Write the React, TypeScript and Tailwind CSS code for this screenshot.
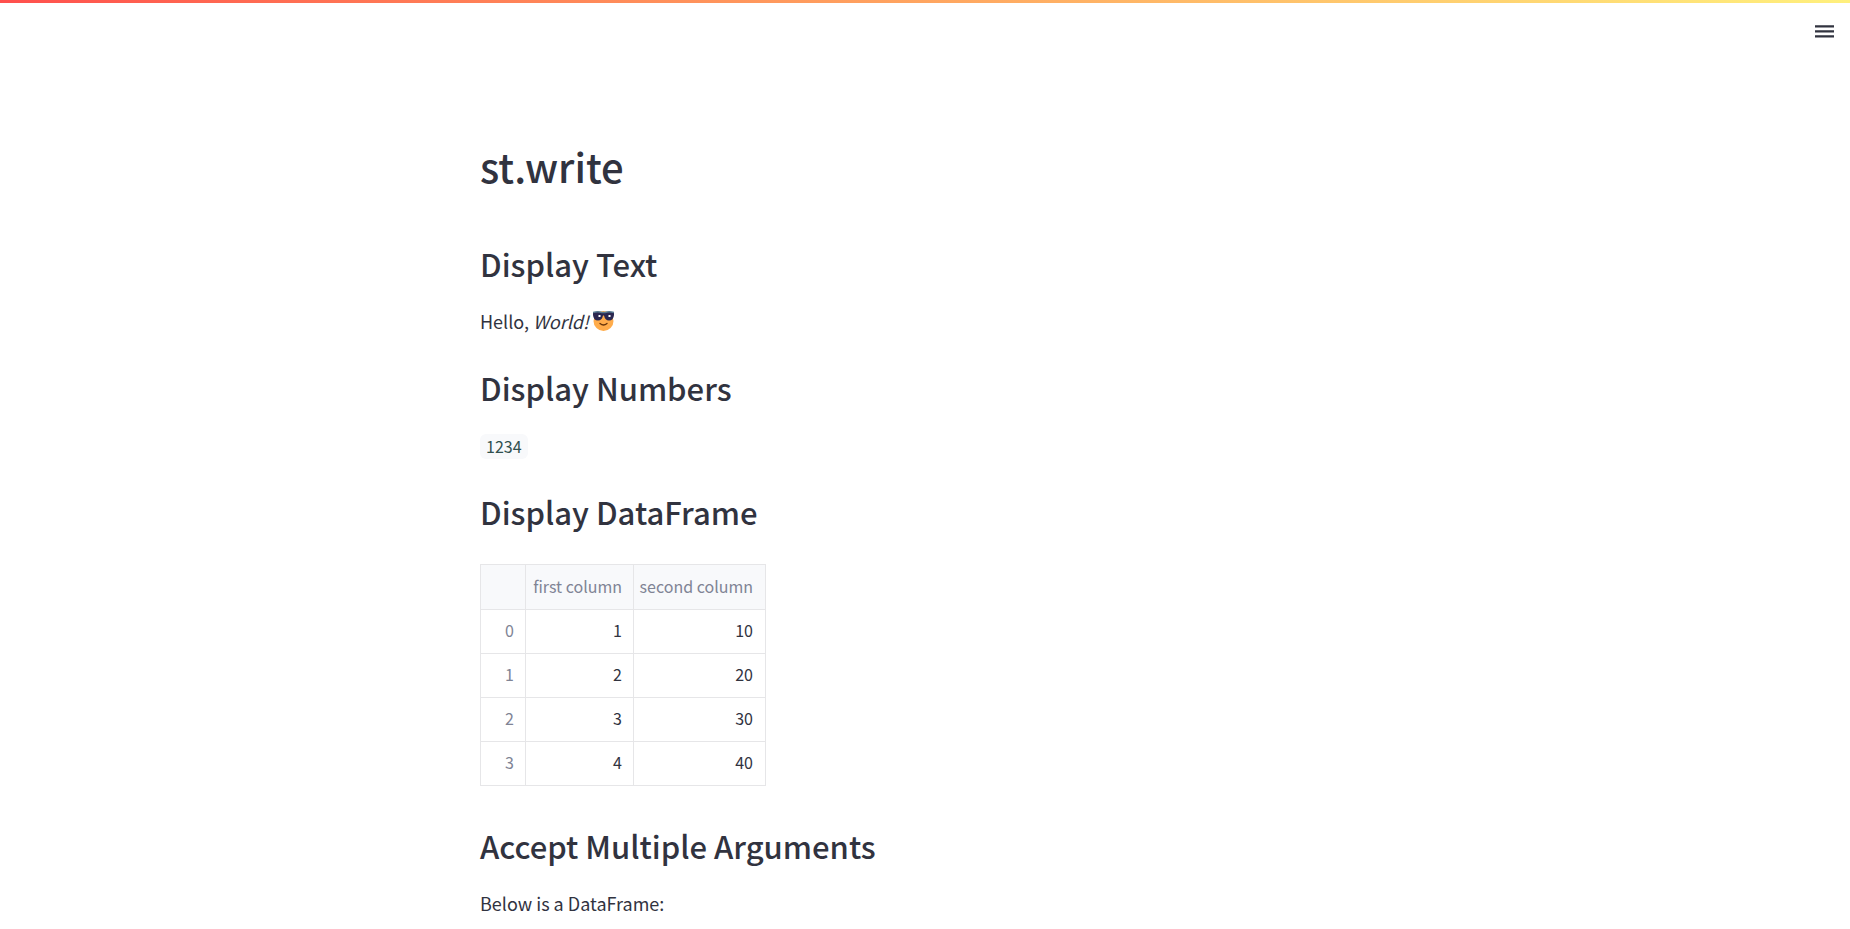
import type { ReactNode } from 'react';

const rows = [
  [1, 10],
  [2, 20],
  [3, 30],
  [4, 40],
];

function Heading({ children }: { children: ReactNode }) {
  return <h2 className="text-[31px] leading-[44px] font-medium">{children}</h2>;
}

function SunglassesEmoji() {
  return (
    <svg role="img" aria-label="smiling face with sunglasses" viewBox="0 0 42 40" className="h-5 w-[21px]">
      <circle cx="21" cy="20" r="20" fill="#ffac4b" />
      <path d="M14 25 Q21 31 28 25" fill="none" stroke="#66330a" strokeWidth="2.6" strokeLinecap="round" />
      <path
        d="M0 3 Q10 0 18 3 Q21 4 24 3 Q32 0 42 3 V8 Q41 19 32 19 Q24 19 22 9 H20 Q18 19 10 19 Q1 19 0 8Z"
        fill="#2b2750"
      />
      <path d="M0 3 Q10 0 18 3 H24 Q32 0 42 3" fill="none" stroke="#597b91" strokeWidth="3" />
      <path d="M11 8h4v4h-4zM31 8h4v4h-4z" fill="#fff" />
    </svg>
  );
}

export default function App() {
  return (
    <div className="min-h-screen bg-white font-['Noto_Sans_CJK_SC',sans-serif] text-[#31333f]">
      <div className="h-[3px] bg-linear-to-r from-[#ff4f4d] via-[#ffa560] to-[#fff07d]" />
      <header className="flex h-[57px] items-center justify-end px-4">
        <button type="button" aria-label="Main menu" className="flex h-6 w-[19px] items-center justify-center">
          <svg viewBox="0 0 19 14" className="h-[14px] w-[19px]" fill="#31333f">
            <path d="M0 0.2h19v2.2H0zM0 5.2h19v2.2H0zM0 10.2h19v2.2H0z" />
          </svg>
        </button>
      </header>
      <main className="mx-auto max-w-[890px] pt-[76px]">
        <h1 className="text-[40px] leading-[60px] font-medium">st.write</h1>
        <div className="flex flex-col gap-5 pt-[46px]">
          <section className="flex flex-col gap-[21px]">
            <Heading>Display Text</Heading>
            <p className="flex h-[39px] items-start gap-1 text-[18px] leading-7">
              <span>
                Hello, <em>World!</em>
              </span>
              <span className="pt-1">
                <SunglassesEmoji />
              </span>
            </p>
          </section>
          <section className="flex flex-col gap-6">
            <Heading>Display Numbers</Heading>
            <p className="flex h-9 items-start">
              <code className="rounded-md bg-[#f8f9fb] px-1.5 font-['Noto_Sans_CJK_SC',monospace] text-[16px] leading-[25px] text-[#31504f]">
                1234
              </code>
            </p>
          </section>
          <section className="flex flex-col gap-[30px]">
            <Heading>Display DataFrame</Heading>
            <table className="w-[285px] table-fixed border-collapse text-right text-[16px] leading-6">
              <colgroup>
                <col className="w-[45px]" />
                <col className="w-[108px]" />
                <col className="w-[132px]" />
              </colgroup>
              <thead>
                <tr className="h-[45px] bg-[#f8f9fb] text-[#808495]">
                  <td className="border border-[#e6e6e8]" />
                  <th scope="col" className="border border-[#e6e6e8] pr-[11px] pb-0.5 font-normal whitespace-nowrap">
                    first column
                  </th>
                  <th scope="col" className="border border-[#e6e6e8] pr-3 pb-0.5 font-normal whitespace-nowrap">
                    second column
                  </th>
                </tr>
              </thead>
              <tbody>
                {rows.map(([first, second], index) => (
                  <tr key={index} className="h-11">
                    <th scope="row" className="border border-[#e6e6e8] pr-[11px] pb-1 font-normal text-[#808495]">
                      {index}
                    </th>
                    <td className="border border-[#e6e6e8] pr-[11px] pb-1">{first}</td>
                    <td className="border border-[#e6e6e8] pr-3 pb-1">{second}</td>
                  </tr>
                ))}
              </tbody>
            </table>
          </section>
          <section className="flex flex-col gap-[21px] pt-[18px]">
            <Heading>Accept Multiple Arguments</Heading>
            <p className="text-[18px] leading-7">Below is a DataFrame:</p>
          </section>
        </div>
      </main>
    </div>
  );
}
